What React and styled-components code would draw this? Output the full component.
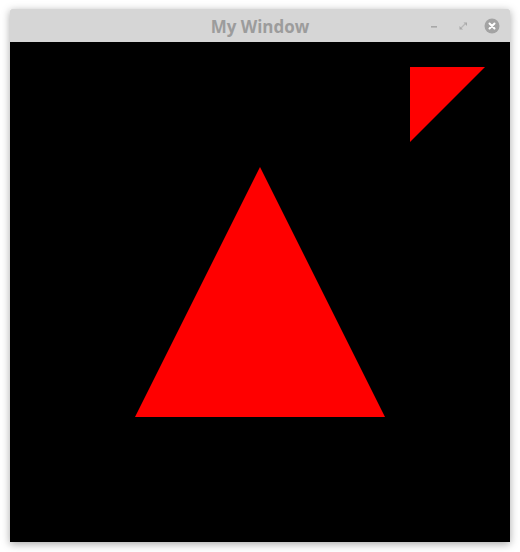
import React from "react";
import styled, { createGlobalStyle } from "styled-components";

const Global = createGlobalStyle`
  html, body { margin: 0; padding: 0; background: #ffffff; }
  body { font-family: "Open Sans", "Noto Sans", sans-serif; }
`;

const Page = styled.div`
  width: 520px;
  height: 552px;
  padding: 9px 10px 0 10px;
  box-sizing: border-box;
`;

const Window = styled.div`
  width: 500px;
  display: flex;
  flex-direction: column;
  box-shadow: 0 2px 8px rgba(0, 0, 0, 0.35);
`;

const TitleBar = styled.div`
  height: 33px;
  background: #d6d6d6;
  display: grid;
  grid-template-columns: 1fr auto 1fr;
  align-items: center;
  border-radius: 2px 2px 0 0;
`;

const Title = styled.div`
  grid-column: 2;
  font-family: "Open Sans", sans-serif;
  font-weight: 700;
  font-size: 17px;
  color: #9c9c9c;
  letter-spacing: 0;
  padding-top: 1px;
`;

const Controls = styled.div`
  grid-column: 3;
  justify-self: end;
  display: flex;
  align-items: center;
  gap: 13px;
  padding-right: 10px;
`;

const CtrlButton = styled.div`
  width: ${(p) => p.$size || 16}px;
  height: ${(p) => p.$size || 16}px;
  display: flex;
  align-items: center;
  justify-content: center;
`;

const Canvas = styled.div`
  width: 500px;
  height: 500px;
  background: #000000;
  svg { display: block; }
`;

export default function App() {
  return (
    <>
      <Global />
      <Page>
        <Window>
          <TitleBar>
            <Title>My Window</Title>
            <Controls>
              <CtrlButton>
                <svg width="16" height="16" viewBox="0 0 16 16">
                  <rect x="5" y="8" width="6" height="1.6" fill="#a8a8a8" />
                </svg>
              </CtrlButton>
              <CtrlButton>
                <svg width="16" height="16" viewBox="0 0 16 16">
                  <path d="M8.5 4.5 H12 V8 Z" fill="#a8a8a8" />
                  <path d="M4.5 8 V11.5 H8 Z" fill="#a8a8a8" />
                  <path d="M6 10 L10.5 5.5" stroke="#b8b8b8" strokeWidth="1.2" />
                </svg>
              </CtrlButton>
              <CtrlButton>
                <svg width="16" height="16" viewBox="0 0 16 16">
                  <circle cx="8" cy="8" r="7.5" fill="#a3a3a3" />
                  <path d="M5.5 5.5 L10.5 10.5 M10.5 5.5 L5.5 10.5" stroke="#ffffff" strokeWidth="2" strokeLinecap="round" />
                </svg>
              </CtrlButton>
            </Controls>
          </TitleBar>
          <Canvas>
            <svg width="500" height="500" viewBox="0 0 500 500">
              <polygon points="250,125 375,375 125,375" fill="#ff0000" />
              <polygon points="400,25 475,25 400,100" fill="#ff0000" />
            </svg>
          </Canvas>
        </Window>
      </Page>
    </>
  );
}
